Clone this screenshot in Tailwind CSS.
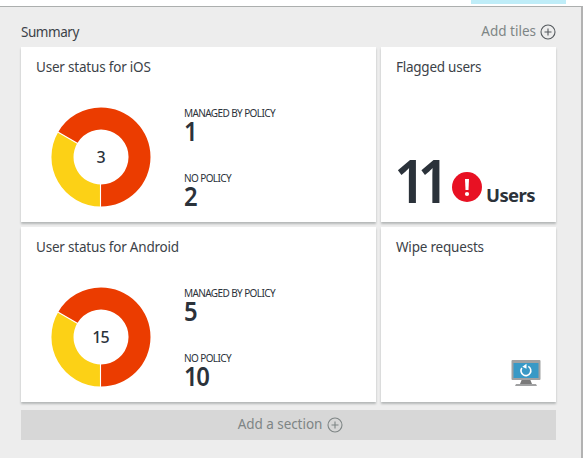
<!DOCTYPE html>
<html lang="en">
<head>
<meta charset="utf-8">
<title>Summary</title>
<script src="https://cdn.jsdelivr.net/npm/@tailwindcss/browser@4"></script>
</head>
<body class="w-[584px] h-[458px] overflow-hidden bg-white font-['Noto_Sans','Open_Sans',sans-serif] text-[#2b323a]">
<svg class="hidden">
  <symbol id="donut" viewBox="0 0 100 100">
    <path fill="#eb3c00" d="M50 .5a49.5 49.5 0 1 1 0 99v-22a27.5 27.5 0 1 0-23.8-41.25L7.1 25.2A49.5 49.5 0 0 1 50 .5z"/>
    <path fill="#fcd116" d="M7.1 25.2A49.5 49.5 0 0 0 50 99.5v-22a27.5 27.5 0 0 1-23.8-41.25z"/>
    <path stroke="#fff" stroke-width="1.1" d="M49.5 76v24M28 37.3 5.5 24.3"/>
  </symbol>
  <symbol id="plus" viewBox="0 0 16 16">
    <g fill="none" stroke="currentColor" stroke-width="1.1"><circle cx="8" cy="8" r="7"/><path d="M8 4.5v7M4.5 8h7"/></g>
  </symbol>
</svg>
<div class="h-[6px] flex justify-end pr-[18px]"><div class="w-[95px] h-[4px] bg-[#bfedf8]"></div></div>
<main class="w-[583px] h-[452px] bg-[#ededed] border-t border-t-[#acafae] border-r-2 border-r-[#b2b2b2] pl-[21px] pr-[25px]">
  <header class="h-[40px] flex justify-between text-[13.5px] leading-[20px]">
    <h1 class="pt-[15px] tracking-[-0.45px] text-[#3c4248]">Summary</h1>
    <div class="pt-[14px] flex gap-[4px] text-[#7e8585]"><span>Add tiles</span><svg class="size-[16px] mt-[3px] text-[#555a5e]"><use href="#plus"/></svg></div>
  </header>
  <div class="grid grid-cols-[355px_175px] grid-rows-[175px_175px] gap-[5px] text-[13.5px] leading-[20px]">
    <section class="bg-white shadow-[0_2px_2px_#b5b8b8] px-[15px] pt-[10px]">
      <h2 class="tracking-[-0.2px] text-[#3c4248]">User status for iOS</h2>
      <div class="flex pl-[15px]">
        <div class="grid place-items-center mt-[30px] size-[100px]"><svg class="size-[100px] col-start-1 row-start-1"><use href="#donut"/></svg><span class="col-start-1 row-start-1 text-[16px] font-medium">3</span></div>
        <dl class="ml-[33px] mt-[30px] whitespace-nowrap">
          <dt class="text-[10px] leading-[12px] tracking-[-0.6px]">MANAGED BY POLICY</dt><dd class="h-[53px] text-[26.5px] leading-[25px] font-semibold tracking-[-1.5px] origin-left scale-x-[0.9]">1</dd>
          <dt class="text-[10px] leading-[12px] tracking-[-0.6px]">NO POLICY</dt><dd class="text-[26.5px] leading-[25px] font-semibold tracking-[-1.5px] origin-left scale-x-[0.9]">2</dd>
        </dl>
      </div>
    </section>
    <section class="bg-white shadow-[0_2px_2px_#b5b8b8] px-[15px] pt-[10px]">
      <h2 class="tracking-[-0.25px] text-[#3c4248]">Flagged users</h2>
      <div class="flex items-start mt-[75px]">
        <span class="w-[56px] -mt-[2px] text-[59px] leading-[60px] font-semibold tracking-[-9px] -ml-[2px] mr-[2px] origin-left scale-x-[0.95]">11</span>
        <svg class="size-[30px] mt-[20px]" viewBox="0 0 30 30"><circle cx="15" cy="15" r="15" fill="#e81123"/><path fill="#fff" d="M13 7h4l-.5 11h-3z"/><circle cx="15" cy="22" r="2.1" fill="#fff"/></svg>
        <span class="ml-[4px] mt-[31px] text-[18.5px] leading-[24px] font-bold tracking-[-0.6px]">Users</span>
      </div>
    </section>
    <section class="bg-white shadow-[0_2px_2px_#b5b8b8] px-[15px] pt-[10px]">
      <h2 class="tracking-[-0.2px] text-[#3c4248]">User status for Android</h2>
      <div class="flex pl-[15px]">
        <div class="grid place-items-center mt-[30px] size-[100px]"><svg class="size-[100px] col-start-1 row-start-1"><use href="#donut"/></svg><span class="col-start-1 row-start-1 pr-px text-[16px] font-medium tracking-[-1px]">15</span></div>
        <dl class="ml-[33px] mt-[30px] whitespace-nowrap">
          <dt class="text-[10px] leading-[12px] tracking-[-0.6px]">MANAGED BY POLICY</dt><dd class="h-[53px] text-[26.5px] leading-[25px] font-semibold tracking-[-1.5px] origin-left scale-x-[0.9]">5</dd>
          <dt class="text-[10px] leading-[12px] tracking-[-0.6px]">NO POLICY</dt><dd class="text-[26.5px] leading-[25px] font-semibold tracking-[-1.5px] origin-left scale-x-[0.9]">10</dd>
        </dl>
      </div>
    </section>
    <section class="bg-white shadow-[0_2px_2px_#b5b8b8] px-[15px] pt-[10px] pb-[15px] flex flex-col justify-between">
      <h2 class="tracking-[-0.2px] text-[#3c4248]">Wipe requests</h2>
      <svg class="w-[30px] h-[27px] self-end" viewBox="0 0 30 27"><path fill="#7a7a7a" d="M11 19h8l2 5H9z"/><path fill="#a0a1a2" d="M5 24h20l1 2H4z"/><rect x=".5" width="29" height="20" rx="1" fill="#a0a1a2"/><path fill="#3999c6" d="M2.5 3h25v15h-25z"/><path fill="none" stroke="#fff" stroke-width="1.6" d="M17.3 6.4A4.9 4.9 0 1 1 10.8 8"/><path fill="#fff" d="M11.3 6.8 15.5 3.8v5z"/></svg>
    </section>
  </div>
  <div class="mt-[8px] h-[30px] bg-[#d7d7d7] flex items-center justify-center gap-[5px] pl-[4px] text-[13.5px] leading-[20px] text-[#7e8585]"><span class="-mt-[2px] tracking-[-0.05px]">Add a section</span><svg class="size-[16px]"><use href="#plus"/></svg></div>
</main>
</body>
</html>
